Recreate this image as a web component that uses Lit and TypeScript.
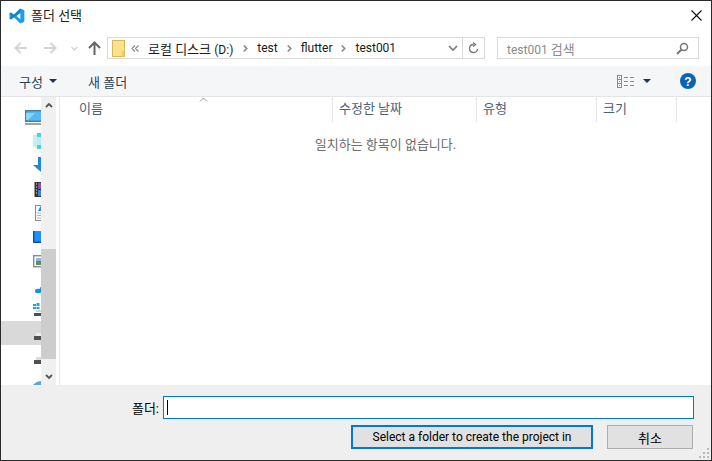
import { LitElement, html, css, svg } from 'lit';
import { customElement } from 'lit/decorators.js';

const chev = svg`<svg width="5" height="9" viewBox="0 0 5 9"><path d="M.7 1.500 3.700 4.500 .7 7.500" fill="none" stroke="#8a8a8a" stroke-width="1.700"/></svg>`;

// sidebar icons are clipped by the scrollbar, the drawings run past the 40px edge
const navIcons = [
  svg`<svg width="30" height="18" viewBox="0 0 30 18"><rect x="4.700" y="2.700" width="24" height="10.600" fill="#52b8f8" stroke="#4a7a9c" stroke-width="1.400"/><path d="M5 5 14 5 7 12 5 12Z" fill="#8fd4fb"/><path d="M4 16h24" stroke="#9aa4ad" stroke-width="2"/></svg>`,
  svg`<svg width="30" height="18" viewBox="0 0 30 18"><path d="M12 3 16 2V16L12 15Z" fill="#c8eef0"/><path d="M16 1 30 1V7L16 5ZM16 17 30 17V11L16 13Z" fill="#4fd0d8"/><path d="M16 5 30 7V11L16 13Z" fill="#b6ecef"/></svg>`,
  svg`<svg width="30" height="18" viewBox="0 0 30 18"><path d="M17 1h9v8h4L20 16 12 9h5Z" fill="#1e88e0"/></svg>`,
  svg`<svg width="30" height="18" viewBox="0 0 30 18"><rect x="13.500" y="2" width="17" height="15" fill="#333"/><rect x="17" y="3" width="13" height="6" fill="#6a58b8"/><rect x="17" y="10" width="13" height="6" fill="#3f7fd0"/><path d="M18 6h4" stroke="#c84a4a" stroke-width="2"/><path d="M15 4h1M15 7h1M15 10h1M15 13h1" stroke="#eee"/></svg>`,
  svg`<svg width="30" height="18" viewBox="0 0 30 18"><rect x="14.500" y="1.500" width="18" height="15" fill="#fff" stroke="#8a8a8a"/><path d="M16 9h12M16 11.500h12M16 14h12" stroke="#9ab4c8"/><path d="M17 7 19.500 2 22 7Z" fill="#2a8ae0"/></svg>`,
  svg`<svg width="30" height="18" viewBox="0 0 30 18"><rect x="12" y="3" width="18" height="12" fill="#1e90ff"/><path d="M12.700 3v11.300H30" fill="none" stroke="#0a4f96" stroke-width="1.400"/></svg>`,
  svg`<svg width="30" height="18" viewBox="0 0 30 18"><rect x="12.700" y="3.700" width="20" height="11" fill="#fff" stroke="#8a8a8a" stroke-width="1.400"/><rect x="15" y="6" width="15" height="3" fill="#8ab8dc"/><rect x="15" y="9" width="15" height="4" fill="#5f8a6a"/></svg>`,
  svg`<svg width="30" height="18" viewBox="0 0 30 18"><ellipse cx="17" cy="15" rx="3" ry="2.200" fill="#1490f0"/><circle cx="22" cy="14" r="3.600" fill="#1490f0"/><rect x="20" y="12" width="10" height="5" fill="#1490f0"/></svg>`,
  svg`<svg width="30" height="18" viewBox="0 0 30 18"><path d="M12 4h3v2h-3ZM15.500 3h3v3h-3ZM12 7h3v2h-3ZM15.500 7h3v2h-3Z" fill="#12a8f0"/><path d="M15 10h15v2H15Z" fill="#d4d4d4"/><path d="M13 13h17v3H13Z" fill="#505050"/></svg>`,
  svg`<svg width="30" height="18" viewBox="0 0 30 18"><path d="M15 9h15v3H15Z" fill="#ececec"/><path d="M13 12h17v4H13Z" fill="#505050"/></svg>`,
  svg`<svg width="30" height="18" viewBox="0 0 30 18"><path d="M15 9h15v3H15Z" fill="#dcdcdc"/><path d="M13 12h17v4H13Z" fill="#505050"/></svg>`,
  svg`<svg width="30" height="18" viewBox="0 0 30 18"><circle cx="20" cy="19" r="10" fill="#5aa8d8"/><path d="M14 13h10v3H14Z" fill="#b8dcf0"/></svg>`,
];

@customElement('app-root')
export class AppRoot extends LitElement {
  static styles = css`
    :host {
      display: block;
      width: 712px;
      height: 461px;
      overflow: hidden;
      font-family: Roboto, "Noto Sans CJK KR", sans-serif;
      font-size: 13px;
      color: #1a1a1a;
    }
    .lat { font-size: 12px; }
    .window {
      box-sizing: border-box;
      width: 712px;
      height: 461px;
      border: 1px solid #2b2b2b;
      background: #fff;
      display: flex;
      flex-direction: column;
    }
    .title {
      height: 29px;
      flex: none;
      display: flex;
      align-items: center;
      padding-left: 8px;
      gap: 6px;
    }
    .title span { flex: 1; color: #222; padding-bottom: 2px; }
    .close { margin-right: 9px; display: block; }
    .nav {
      height: 36px;
      flex: none;
      display: flex;
      align-items: center;
      padding-left: 13px;
    }
    .nav svg { display: block; flex: none; }
    .back { margin-right: 17px; }
    .fwd { margin-right: 14px; }
    .down { margin-right: 10px; }
    .up { margin-right: 6px; }
    .address {
      box-sizing: border-box;
      width: 378px;
      height: 22px;
      border: 1px solid #d9d9d9;
      display: flex;
      align-items: center;
      padding-left: 4px;
    }
    .crumbs { flex: 1; display: flex; align-items: center; gap: 9px; white-space: nowrap; }
    .crumbs .more { margin: 0 0 0 -3px; }
    .crumbs .drive { padding-right: 1px; }
    .refresh {
      width: 21px;
      height: 20px;
      border-left: 1px solid #d9d9d9;
      display: flex;
      align-items: center;
      justify-content: center;
      margin-left: 4px;
    }
    .search {
      box-sizing: border-box;
      width: 202px;
      height: 22px;
      margin-left: 12px;
      border: 1px solid #d9d9d9;
      display: flex;
      align-items: center;
      justify-content: space-between;
      padding: 0 9px 0 9px;
      color: #8a8a8a;
    }
    .toolbar {
      height: 31px;
      flex: none;
      background: #f5f6f7;
      border-bottom: 1px solid #e4e5e6;
      box-sizing: border-box;
      display: flex;
      align-items: center;
      padding-left: 18px;
      color: #2b3f55;
    }
    .organize { display: flex; align-items: center; gap: 6px; width: 69px; }
    .spacer { flex: 1; }
    .views { display: flex; align-items: center; gap: 9px; margin-right: 29px; }
    .help { margin-right: 15px; display: block; }
    .main { flex: 1; display: flex; min-height: 0; }
    .side { width: 40px; flex: none; overflow: hidden; padding-top: 8px; }
    .row { height: 24px; display: flex; align-items: center; justify-content: flex-end; }
    .row svg { display: block; flex: none; margin-right: -10px; }
    .row.sel { background: #d9d9d9; }
    .scroll {
      width: 15px;
      flex: none;
      background: #f0f0f0;
      display: flex;
      flex-direction: column;
      align-items: center;
    }
    .arrow { height: 152px; flex: none; padding-top: 6px; box-sizing: border-box; }
    .arrow.bottom { height: 26px; padding-top: 15px; }
    .arrow svg { display: block; }
    .thumb { width: 100%; height: 110px; flex: none; background: #cdcdcd; }
    .sep { width: 3px; flex: none; border-right: 1px solid #eaeaea; }
    .list { flex: 1; position: relative; min-width: 0; }
    .head {
      display: flex;
      height: 25px;
      color: #4c607a;
      padding-left: 13px;
    }
    .col {
      box-sizing: border-box;
      height: 25px;
      border-right: 1px solid #e5e5e5;
      padding: 2px 0 0 6px;
      line-height: 20px;
    }
    .empty { text-align: center; color: #6d6d6d; margin-top: 12px; }
    .sort { position: absolute; left: 139px; top: 0; display: block; }
    .footer {
      height: 75px;
      flex: none;
      background: #efefef;
      box-sizing: border-box;
      padding: 11px 17px 0 0;
      display: flex;
      flex-direction: column;
      align-items: flex-end;
      position: relative;
    }
    .field { display: flex; align-items: center; gap: 4px; color: #000; }
    .input {
      box-sizing: border-box;
      width: 531px;
      height: 23px;
      background: #fff;
      border: 1px solid #0078d7;
      display: flex;
      align-items: center;
      padding-left: 3px;
    }
    .caret { width: 1px; height: 15px; background: #000; }
    .buttons { display: flex; margin: 6px 1px 0 0; gap: 14px; }
    .btn {
      box-sizing: border-box;
      height: 24px;
      background: #e1e1e1;
      border: 1px solid #adadad;
      display: flex;
      align-items: center;
      justify-content: center;
      color: #000;
    }
    .btn.primary { width: 242px; border: 2px solid #0078d7; }
    .btn.cancel { width: 86px; }
    .grip { position: absolute; right: 1px; bottom: 1px; display: block; }
  `;

  render() {
    return html`
      <div class="window">
        <div class="title">
          <svg width="16" height="16" viewBox="0 0 100 100">
            <path d="M71 3 96 14V86L71 97 30 58 12 72 3 67V33L12 28 30 42ZM71 30 47 50 71 70Z" fill="#1f9cf0"/>
            <path d="M3 33 12 28 30 42 71 3V30L12 72 3 67 19 50Z" fill="#0a78c8" opacity=".75"/>
          </svg>
          <span>폴더 선택</span>
          <svg class="close" width="11" height="11" viewBox="0 0 11 11"><path d="M.5.5 10.500 10.500M10.500.5.5 10.500" stroke="#111" stroke-width="1.100"/></svg>
        </div>
        <div class="nav">
          <svg class="back" width="13" height="12" viewBox="0 0 13 12"><path d="M6.500 1 1.500 6 6.500 11M2 6H13" fill="none" stroke="#d4d4d4" stroke-width="2"/></svg>
          <svg class="fwd" width="13" height="12" viewBox="0 0 13 12"><path d="M6.500 1 11.500 6 6.500 11M11 6H0" fill="none" stroke="#d4d4d4" stroke-width="2"/></svg>
          <svg class="down" width="7" height="5" viewBox="0 0 7 5"><path d="M.5 1 3.500 4 6.500 1" fill="none" stroke="#d4d4d4" stroke-width="1.400"/></svg>
          <svg class="up" width="13" height="14" viewBox="0 0 13 14"><path d="M1 7 6.500 1.500 12 7M6.500 2V14" fill="none" stroke="#666" stroke-width="2"/></svg>
          <div class="address">
            <div class="crumbs">
              <svg width="13" height="17" viewBox="0 0 13 17"><rect x=".5" y=".5" width="12" height="16" fill="#ffe08c" stroke="#d9b85c"/><rect x="10" y="11" width="2.500" height="5.500" fill="#f3c95c"/></svg>
              <svg class="more" width="8" height="7" viewBox="0 0 8 7"><path d="M4 .5 1 3.500 4 6.500M7.500 .5 4.500 3.500 7.500 6.500" fill="none" stroke="#8a8a8a" stroke-width="1.200"/></svg>
              <span class="drive">로컬 디스크 <span class="lat">(D:)</span></span>${chev}
              <span class="lat">test</span>${chev}
              <span class="lat">flutter</span>${chev}
              <span class="lat">test001</span>
            </div>
            <svg width="10" height="7" viewBox="0 0 10 7"><path d="M1 1 5 5 9 1" fill="none" stroke="#777" stroke-width="1.600"/></svg>
            <div class="refresh">
              <svg width="11" height="12" viewBox="0 0 11 12"><path d="M5.500 2.500A4 4 0 1 0 9.500 7M5 .5 7.500 2.500 5 4.500" fill="none" stroke="#777" stroke-width="1.300"/></svg>
            </div>
          </div>
          <div class="search">
            <span><span class="lat">test001</span> 검색</span>
            <svg width="13" height="13" viewBox="0 0 13 13"><circle cx="8" cy="5" r="3.500" fill="none" stroke="#777" stroke-width="1.500"/><path d="M5.500 7.500 1 12" stroke="#777" stroke-width="2"/></svg>
          </div>
        </div>
        <div class="toolbar">
          <div class="organize">구성
            <svg width="8" height="4" viewBox="0 0 8 4"><path d="M0 0h8L4 4Z" fill="#1f3553"/></svg>
          </div>
          <span>새 폴더</span>
          <div class="spacer"></div>
          <div class="views">
            <svg width="17" height="13" viewBox="0 0 17 13"><rect x=".5" y=".5" width="4" height="12" fill="#fff" stroke="#8a8a8a"/><path d="M1 4.500h3M1 8.500h3" stroke="#8a8a8a"/><path d="M2 2.500h1M2 6.500h1M2 10.500h1" stroke="#c06060"/><path d="M7 2.500h4M13 2.500h4M7 6.500h4M13 6.500h4M7 10.500h4M13 10.500h4" stroke="#8a8a8a"/></svg>
            <svg width="8" height="4" viewBox="0 0 8 4"><path d="M0 0h8L4 4Z" fill="#1f3553"/></svg>
          </div>
          <svg class="help" width="16" height="16" viewBox="0 0 16 16">
            <circle cx="8" cy="8" r="8" fill="#0a64b4"/>
            <text x="8" y="12.500" text-anchor="middle" font-size="12" font-weight="700" font-family="Liberation Sans" fill="#fff">?</text>
          </svg>
        </div>
        <div class="main">
          <div class="side">
            ${navIcons.map((icon, i) => html`<div class="row ${i === 9 ? 'sel' : ''}">${icon}</div>`)}
          </div>
          <div class="scroll">
            <div class="arrow"><svg width="8" height="5" viewBox="0 0 8 5"><path d="M1 4 4 1 7 4" fill="none" stroke="#555" stroke-width="1.800"/></svg></div>
            <div class="thumb"></div>
            <div class="arrow bottom"><svg width="8" height="5" viewBox="0 0 8 5"><path d="M1 1 4 4 7 1" fill="none" stroke="#555" stroke-width="1.800"/></svg></div>
          </div>
          <div class="sep"></div>
          <div class="list">
            <svg class="sort" width="9" height="5" viewBox="0 0 9 5"><path d="M1 4.500 4.500 1 8 4.500" fill="none" stroke="#999"/></svg>
            <div class="head">
              <div class="col" style="width:260px">이름</div>
              <div class="col" style="width:144px">수정한 날짜</div>
              <div class="col" style="width:120px">유형</div>
              <div class="col" style="width:80px">크기</div>
            </div>
            <div class="empty">일치하는 항목이 없습니다.</div>
          </div>
        </div>
        <div class="footer">
          <div class="field"><span>폴더:</span><div class="input"><div class="caret"></div></div></div>
          <div class="buttons">
            <div class="btn primary lat">Select a folder to create the project in</div>
            <div class="btn cancel">취소</div>
          </div>
          <svg class="grip" width="11" height="11" viewBox="0 0 11 11"><path d="M8 0h2v2H8ZM4 4h2v2H4ZM8 4h2v2H8ZM0 8h2v2H0ZM4 8h2v2H4ZM8 8h2v2H8Z" fill="#b8b8b8"/></svg>
        </div>
      </div>
    `;
  }
}
